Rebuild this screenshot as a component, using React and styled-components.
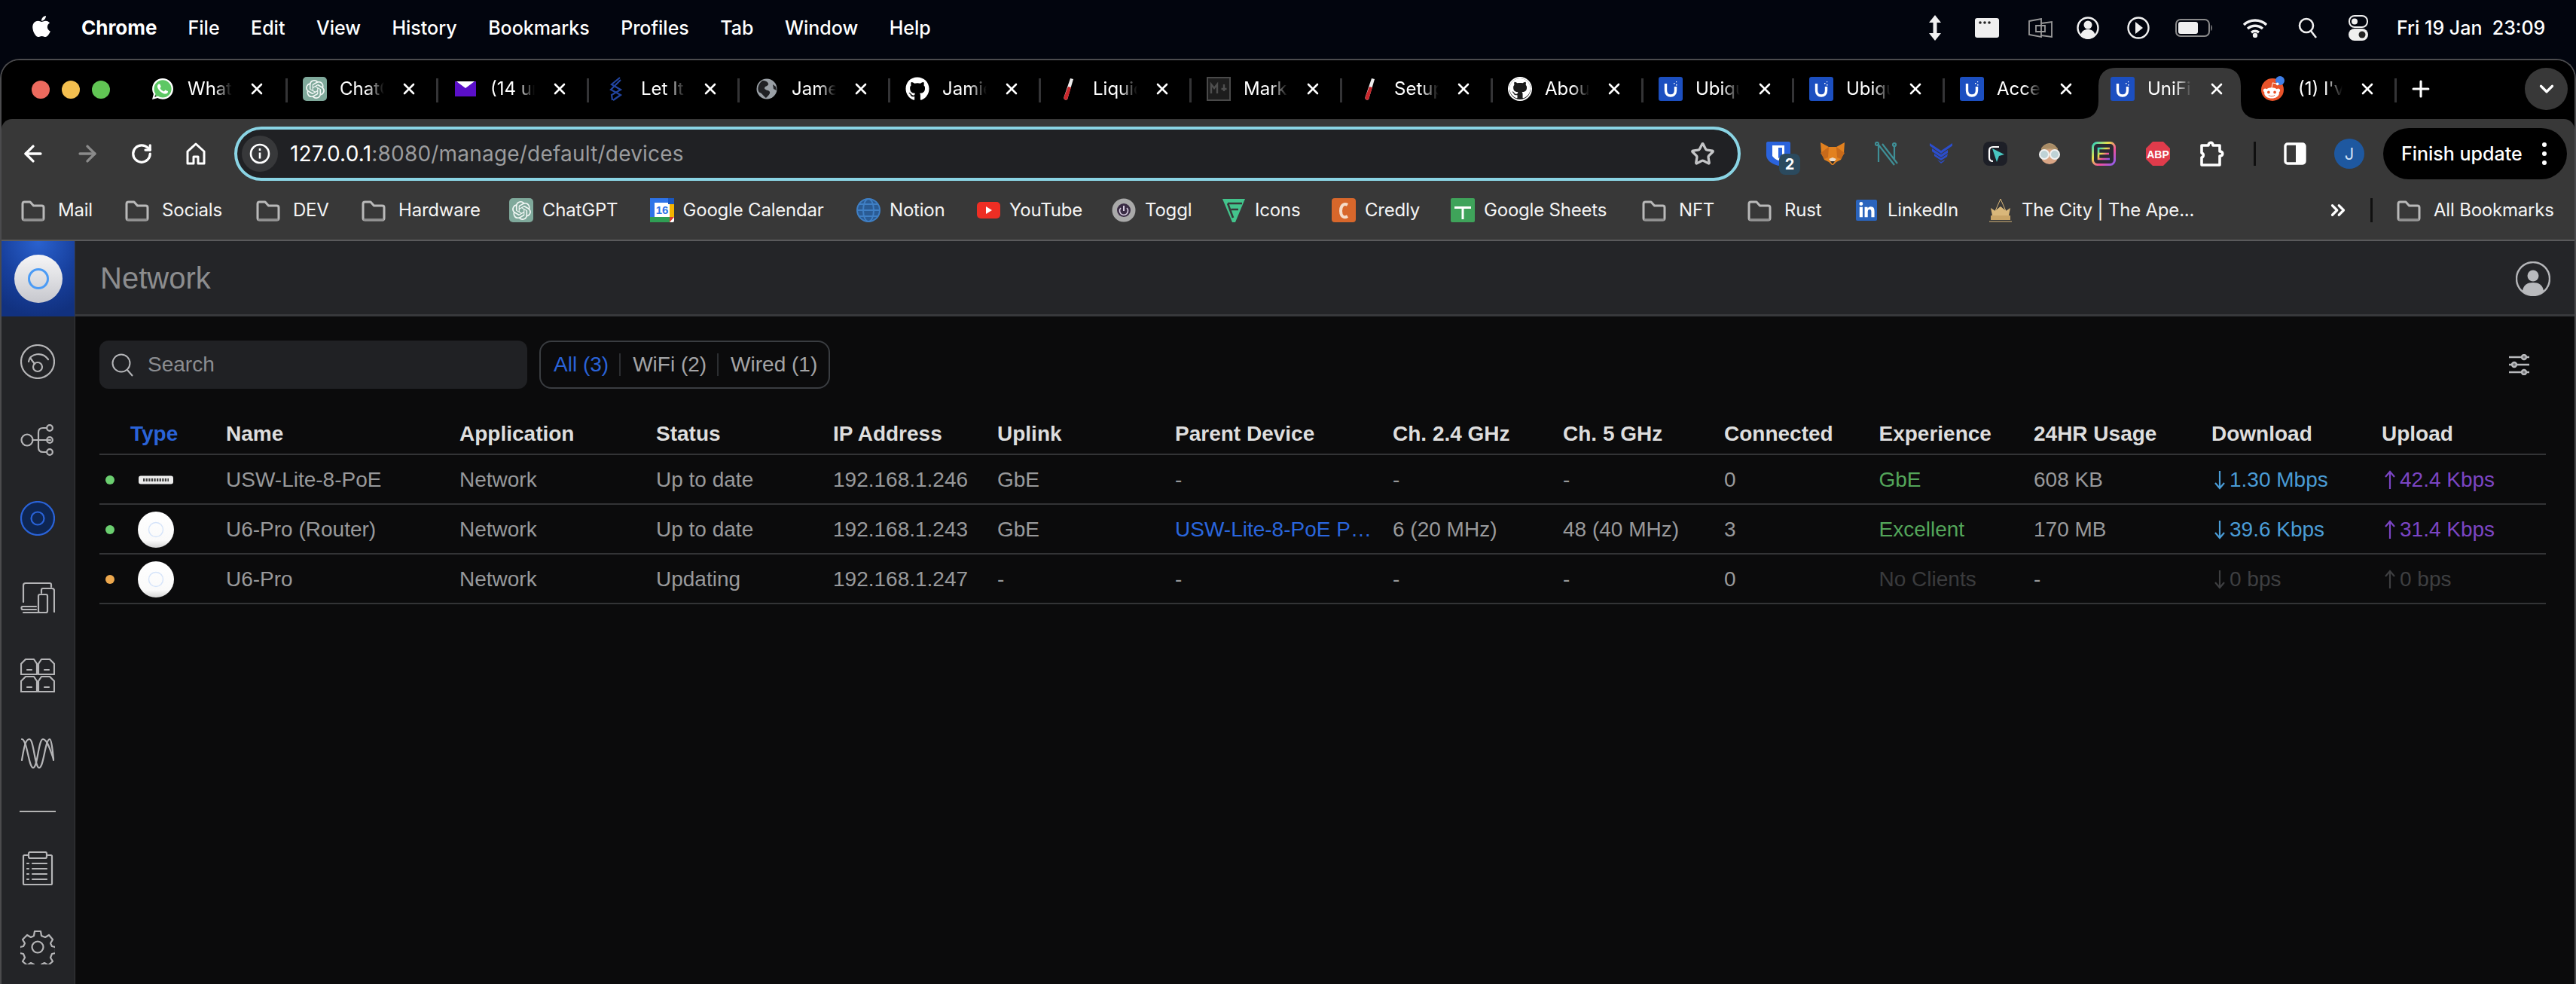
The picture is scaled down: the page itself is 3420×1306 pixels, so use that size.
import React from "react";
import styled, { createGlobalStyle } from "styled-components";
import { FaApple, FaWhatsapp, FaGithub, FaLinkedinIn, FaRedditAlien } from "react-icons/fa";
import { SiOpenai } from "react-icons/si";
import { ArrowLeft, ArrowRight, RotateCw, Star, Plus, ChevronDown, X, ChevronsRight } from "lucide-react";

const Global = createGlobalStyle`
  html, body { margin: 0; padding: 0; background: #02050e; }
  * { box-sizing: border-box; }
`;
const UI = `"Inter", "Liberation Sans", sans-serif`;
const WEB = `"Liberation Sans", Arial, sans-serif`;

const Desktop = styled.div`
  width: 3420px; height: 1306px; overflow: hidden; display: flex; flex-direction: column;
  background: #02050e; font-family: ${UI}; color: #fff;
`;
const MenuBar = styled.div`
  flex: none; height: 78px; display: flex; align-items: center; padding: 0 33px 4px 41px; 
`;
const AppleSlot = styled.span`display: flex; width: 28px; margin-right: 39px; font-size: 32px; position: relative; top: -2px;`;
const MenuItem = styled.span`
  font-size: ${p => (p.$bold ? 26 : 25)}px; font-weight: ${p => (p.$bold ? 700 : 500)}; margin-right: ${p => (p.$bold ? 41 : 41.5)}px; line-height: 1;
`;
const StatusArea = styled.div`margin-left: auto; display: flex; align-items: center;`;
const StatusSlot = styled.span`display: flex; justify-content: center; align-items: center; width: ${p => p.$w}px;`;
const Clock = styled.span`font-size: 25px; font-weight: 500; margin-left: 7px; width: 205px; white-space: pre; line-height: 1;`;

const Window = styled.div`
  flex: 1; min-height: 0; display: flex; flex-direction: column; overflow: hidden;
  border: 2px solid #4b4b4d; border-bottom: 0; border-radius: 26px 26px 0 0; background: #000;
`;
const TabStrip = styled.div`
  flex: none; height: 78px; display: flex; align-items: flex-end; padding-left: 40px; position: relative; background: #000;
`;
const Lights = styled.div`display: flex; gap: 16px; margin-bottom: 27px; margin-right: 34px;`;
const Light = styled.span`width: 24px; height: 24px; border-radius: 50%; background: ${p => p.$c};`;
const Tab = styled.div`
  position: relative; flex: none; width: 200px; height: 68px; padding: 0 0 12px 20px;
  display: flex; align-items: center;
  &:nth-of-type(-n+2) { width: 202px; }
  &::after {
    content: ""; position: absolute; right: 0; top: 14px; width: 3px; height: 32px; background: #343436;
    display: ${p => (p.$noSep ? "none" : "block")};
  }
`;
const TabShape = styled.svg`position: absolute; left: 0; top: 0; overflow: visible;`;
const Fav = styled.span`
  position: relative; flex: none; width: 32px; height: 32px; display: flex; align-items: center; justify-content: center;
`;
const TabTitle = styled.span`
  position: relative; flex: none; width: 62px; margin-left: 17px; font-size: 24px; line-height: 32px; white-space: nowrap; overflow: hidden;
  -webkit-mask-image: linear-gradient(to right, #000 58%, transparent 95%);
  mask-image: linear-gradient(to right, #000 58%, transparent 95%);
`;
const TabClose = styled.span`position: relative; flex: none; display: flex; margin-left: 18px; color: #fff;`;
const NewTab = styled.span`display: flex; margin: 0 0 12px 15px; height: 56px; align-items: center; color: #fff;`;
const TabListBtn = styled.span`
  position: absolute; right: 9px; top: 10px; width: 57px; height: 56px; border-radius: 28px; background: #383838;
  display: flex; align-items: center; justify-content: center; color: #fff;
`;
const WaBubble = styled.span`
  position: relative; width: 32px; height: 32px; display: flex; align-items: center; justify-content: center;
  &::before { content: ""; position: absolute; left: 3px; top: 3px; width: 26px; height: 26px; border-radius: 50%; background: #5dc864; }
  svg { position: relative; }
`;

const Toolbar = styled.div`
  flex: none; height: 92px; background: #383838; border-radius: 14px 14px 0 0; display: flex; align-items: center; padding-left: 6px; padding-top: 0;
`;
const NavBtn = styled.span`
  flex: none; width: 72px; display: flex; align-items: center; justify-content: center; color: ${p => (p.$dim ? "#8b8b8b" : "#fff")};
`;
const Omnibox = styled.div`
  flex: none; width: 2000px; height: 72px; margin-left: 15px; border: 4px solid #8ad4e4; border-radius: 36px; background: #202124;
  display: flex; align-items: center; padding: 0 20px 0 6px;
`;
const InfoChip = styled.span`
  flex: none; width: 48px; height: 48px; border-radius: 50%; background: #37383a; display: flex; align-items: center; justify-content: center;
`;
const Url = styled.span`margin-left: 16px; font-size: 28px; line-height: 1; color: #9b9c9e; letter-spacing: 0.2px; white-space: nowrap;`;
const UrlHost = styled.span`color: #fff;`;
const StarSlot = styled.span`margin-left: auto; display: flex; color: #c4c5c7; margin-right: 10px;`;
const ExtGroup = styled.div`display: flex; align-items: center; margin-left: 14px;`;
const ExtSlot = styled.span`
  flex: none; width: 72px; height: 60px; position: relative; display: flex; align-items: center; justify-content: center;
`;
const Badge = styled.span`
  position: absolute; left: 37px; top: 30px; width: 28px; height: 28px; border-radius: 8px; background: #2b4a5e; color: #fff;
  font-size: 20px; font-weight: 700; display: flex; align-items: center; justify-content: center;
`;
const ToolSep = styled.span`flex: none; width: 3px; height: 32px; background: #0f0f0f; margin: 0 16px 0 19px;`;
const Avatar = styled.span`
  width: 40px; height: 40px; border-radius: 50%; background: #1e58a0; color: #cfe0f5; font-size: 22px; display: flex; align-items: center; justify-content: center;
`;
const FinishPill = styled.span`
  flex: none; margin-left: 9px; width: 244px; height: 68px; border-radius: 34px; background: #000; display: flex; align-items: center;
  padding-left: 24px; font-size: 25px; font-weight: 500;
`;
const KebabSlot = styled.span`margin-left: auto; margin-right: 26px; display: flex;`;

const BookmarksBar = styled.div`
  flex: none; height: 70px; background: #383838; border-bottom: 2px solid #5a5a5c; display: flex; align-items: center; padding: 0 0 10px 26px;
`;
const Bookmark = styled.span`
  flex: none; width: ${p => p.$w}px; display: flex; align-items: center; gap: 12px; font-size: 24px; letter-spacing: -0.2px; line-height: 32px; white-space: nowrap; color: #f4f4f4;
`;
const BookmarkFav = styled.span`flex: none; width: 32px; height: 32px; display: flex; align-items: center; justify-content: center;`;
const FolderBox = styled(BookmarkFav)`margin-right: 5px;`;
const OverflowBtn = styled.span`margin-left: auto; display: flex; color: #fff; margin-right: 28px;`;
const BarSep = styled.span`width: 3px; height: 32px; background: #101010; margin-right: 32px;`;
const LastBookmark = styled(Bookmark)`width: 236px;`;

const Page = styled.div`flex: 1; min-height: 0; display: flex; background: #0b0b0c;`;
const Sidebar = styled.nav`
  flex: none; width: 98px; display: flex; flex-direction: column; align-items: stretch; background: #232427; border-right: 1px solid #37383b; overflow: hidden;
`;
const LogoTile = styled.div`
  flex: none; height: 100px; display: flex; align-items: center; justify-content: center;
  background: radial-gradient(ellipse 90% 100% at 50% 0%, #2a62cf 0%, #173f9c 60%, #11317f 100%);
  margin-bottom: 8px; margin-right: -1px;
`;
const SideItem = styled.div`flex: none; height: 104px; display: flex; align-items: center; justify-content: center; padding-right: 1px;`;
const SideDivider = styled.div`flex: none; height: 2px; width: 48px; margin: 24px 0 23px 24px; background: #b3b3b3;`;

const Main = styled.main`flex: 1; min-width: 0; display: flex; flex-direction: column;`;
const TopBar = styled.header`
  flex: none; height: 100px; background: #242528; border-bottom: 3px solid #38393c; display: flex; align-items: center; padding: 2px 32px 0 33px;
`;
const PageTitle = styled.h1`margin: 0; font: 400 40px ${WEB}; color: #8c8d8f;`;
const UserSlot = styled.span`margin-left: auto; display: flex; margin-right: 0;`;
const Content = styled.section`flex: 1; padding: 32px 38px 0 32px; font-family: ${WEB};`;
const FilterRow = styled.div`display: flex; align-items: center; height: 64px;`;
const SearchBox = styled.div`
  width: 568px; height: 64px; border-radius: 12px; background: #202124; display: flex; align-items: center; gap: 18px; padding-left: 16px;
  font-size: 28px; color: #8b8d91;
`;
const Segments = styled.div`
  margin-left: 16px; width: 386px; height: 64px; border: 2px solid #3a3d41; border-radius: 16px; display: flex; align-items: center; padding-left: 17px;
  font-size: 28px; color: #a3a4a6;
`;
const Segment = styled.span`color: ${p => (p.$on ? "#2a63d8" : "#a3a4a6")}; white-space: nowrap;`;
const SegSep = styled.span`width: 2px; height: 30px; background: #2c2e31; margin: 0 16px 0 14px;`;
const SlidersSlot = styled.span`margin-left: auto; margin-right: 21px; display: flex;`;

const COLS = "168px 310px 261px 235px 218px 236px 289px 226px 214px 205.5px 205.5px 236px 226px 218px";
const HeadRow = styled.div`
  display: grid; grid-template-columns: ${COLS}; height: 56px; margin-top: 32px; padding-top: 2px; align-items: center;
  border-bottom: 2px solid #333436; font-size: 28px; font-weight: 700; color: #dedede;
`;
const HeadCell = styled.span`
  white-space: nowrap; padding-left: ${p => p.$pad || 0}px; color: ${p => (p.$on ? "#2a63d8" : "#dedede")};
`;
const Row = styled.div`
  display: grid; grid-template-columns: ${COLS}; height: 66px; padding-top: 1px; align-items: center; border-bottom: 2px solid #333436; font-size: 28px; color: #98999b;
`;
const Cell = styled.span`white-space: nowrap; color: ${p => p.$c || "#98999b"};`;
const LinkCell = styled.span`display: block; width: 262px; white-space: nowrap; overflow: hidden; text-overflow: ellipsis; color: #2a66de;`;
const TypeCell = styled.span`display: flex; align-items: center; padding-left: 8px;`;
const Dot = styled.span`width: 12px; height: 12px; border-radius: 50%; background: ${p => p.$c}; flex: none; `;
const DeviceSlot = styled.span`margin-left: 31px; width: 48px; display: flex; justify-content: center;`;
const Speed = styled.span`display: flex; align-items: center; gap: 4px; padding-left: 2px; white-space: nowrap; color: ${p => p.$c};`;
const Tile = styled.span`
  width: ${p => p.$w || 32}px; height: ${p => p.$h || 32}px; border-radius: ${p => p.$r || 5}px; background: ${p => p.$bg};
  display: flex; align-items: center; justify-content: center;
`;
const Round = styled.span`
  width: ${p => p.$s}px; height: ${p => p.$s}px; border-radius: 50%; background: ${p => p.$bg};
  display: flex; align-items: ${p => p.$end ? "flex-end" : "center"}; justify-content: center; overflow: hidden;
`;
const RedditWrap = styled.span`
  width: 32px; height: 34px; position: relative; display: flex; align-items: center; justify-content: center;
`;
const RedditFace = styled.span`position: absolute; left: 2px; top: 7px; display: flex;`;

/* ---------- icons ---------- */
const Folder = () => (
  <svg width="32" height="32" viewBox="0 0 32 32" fill="none">
    <path d="M2 7.500C2 6 3 5 4.500 5h7.500l4.500 5h11c1.500 0 2.500 1 2.500 2.500v14c0 1.500-1 2.500-2.500 2.500h-23C3 29 2 28 2 26.500z" stroke="#b9b9b9" strokeWidth="3" strokeLinejoin="round" />
    <path d="M2.500 28.500h27" stroke="#8d8d8d" strokeWidth="2.500" />
  </svg>
);
const UbiTile = () => (
  <svg width="32" height="32" viewBox="0 0 32 32">
    <rect width="32" height="32" rx="3" fill="#1c4fc0" />
    <path d="M9.500 9v9c0 4.500 2.800 7 6.500 7s6.500-2.500 6.500-7V13" fill="none" stroke="#fff" strokeWidth="3.400" />
    <path d="M20 8h1.500v1.500H20zM23 6h1.200v1.200H23zM23 10h1.500v1.500H23z" fill="#fff" />
  </svg>
);
const GptTile = () => (
  <Tile $bg="#7fa99b"><SiOpenai size={25} color="#f2f7f5" /></Tile>
);
const Mail = () => (
  <svg width="28" height="22" viewBox="0 0 28 22"><rect width="28" height="20" y="1" fill="#5a0fc8" /><path d="M2 1h24l-12 9z" fill="#fff" /></svg>
);
const LetIt = () => (
  <svg width="20" height="32" viewBox="0 0 20 32" fill="none" stroke="#22449f" strokeWidth="2.200"><path d="M15 1 4 10l12 7-12 7 1 7" /><path d="M16 4 3 17l13 7L6 31" /></svg>
);
const Globe = () => (
  <svg width="28" height="30" viewBox="0 0 28 28"><circle cx="14" cy="14" r="13.500" fill="#9aa0a6" /><path d="M8 3c4 0 7 1 8 4s-5 3-5 6 6 2 7 5-4 7-5 8c-3-2-5-6-8-7S0 10 8 3zM22 8l4 3 1 5-4-2z" fill="#202124" /></svg>
);
const Tube = () => (
  <svg width="20" height="32" viewBox="0 0 20 32"><path d="M13 2 17 3 9 30c-3 1.500-5 0-4.500-3z" fill="#ededed" /><path d="M10 13l4 1-5 16c-3 1.500-5 0-4.500-3z" fill="#c9272c" /></svg>
);
const Md = () => (
  <svg width="32" height="32" viewBox="0 0 32 32"><rect x="1" y="1" width="30" height="30" fill="#1d1d1d" stroke="#4a4a4a" strokeWidth="2" /><path d="M6 22V10l4 5 4-5v12M23 10v9M19.500 16h7" fill="none" stroke="#4e4e4e" strokeWidth="2.400" /></svg>
);
const GhCircle = () => (
  <Round $s={32} $bg="#fff">
    <Round $s={28} $bg="#1a1a1a" $end><FaGithub size={30} color="#fff" /></Round>
  </Round>
);
const Reddit = () => (
  <RedditWrap>
    <svg width="32" height="34" viewBox="0 0 32 34"><circle cx="15" cy="18" r="15" fill="#e9532a" /><circle cx="25" cy="6" r="6" fill="#3f7fe8" /></svg>
    <RedditFace><FaRedditAlien size={24} color="#fff" /></RedditFace>
  </RedditWrap>
);
const Whats = () => (
  <WaBubble><FaWhatsapp size={32} color="#fff" /></WaBubble>
);
const tabs = [
  ["Whatsa", <Whats />],
  ["ChatGPT", <GptTile />],
  ["(14 unread", <Mail />],
  ["Let It", <LetIt />],
  ["James", <Globe />],
  ["Jamie", <FaGithub size={32} color="#fff" />],
  ["Liquid", <Tube />],
  ["Markdown", <Md />],
  ["Setup", <Tube />],
  ["About", <GhCircle />],
  ["Ubiquiti", <UbiTile />],
  ["Ubiquiti", <UbiTile />],
  ["Access", <UbiTile />],
  ["UniFi", <UbiTile />],
  ["(1) I've", <Reddit />],
];

const FavCal = () => (
  <svg width="32" height="32" viewBox="0 0 32 32"><rect width="32" height="32" rx="2" fill="#fff" /><path d="M0 0h24v6H6v19H0z" fill="#2e73e8" /><path d="M24 0h8v8h-8z" fill="#1a57c0" /><path d="M26 8h6v17h-6z" fill="#f4b400" /><path d="M0 25h26v7H0z" fill="#2f9e54" /><path d="M26 25h6l-6 7z" fill="#d93c2e" /><text x="16" y="21" fontSize="15" fontWeight="700" textAnchor="middle" fill="#2e73e8" fontFamily="Liberation Sans">16</text></svg>
);
const FavGlobe = () => (
  <svg width="32" height="32" viewBox="0 0 32 32" fill="none" stroke="#3f7fc4" strokeWidth="2"><circle cx="16" cy="16" r="15" fill="#2a5b94" /><ellipse cx="16" cy="16" rx="7" ry="15" /><path d="M1 16h30M3 8h26M3 24h26" /></svg>
);
const FavYt = () => (
  <svg width="31" height="22" viewBox="0 0 31 22"><rect width="31" height="22" rx="5" fill="#ee2e24" /><path d="M12 6l8 5-8 5z" fill="#fff" /></svg>
);
const FavToggl = () => (
  <svg width="32" height="32" viewBox="0 0 32 32" fill="none"><circle cx="16" cy="16" r="15.500" fill="#a9a9a9" /><circle cx="16" cy="16" r="9" fill="#3a2b44" /><path d="M16 10v7" stroke="#d9cfe2" strokeWidth="2" /><path d="M12 13a5.500 5.500 0 1 0 8 0" stroke="#d9cfe2" strokeWidth="1.600" /></svg>
);
const FavIcons = () => (
  <svg width="32" height="32" viewBox="0 0 32 32"><path d="M1 1H31L18 32H14Z" fill="#43c48c" /><path d="M8 7L15 26M8 7H27M12.500 15H22" fill="none" stroke="#383838" strokeWidth="2.600" /></svg>
);
const FavCredly = () => (
  <svg width="32" height="32" viewBox="0 0 32 32"><rect width="32" height="32" rx="4" fill="#d8672b" /><path d="M21 9c-5-3-9 1-9 8s4 10 9 7" fill="none" stroke="#f5dcc9" strokeWidth="4" /></svg>
);
const FavSheets = () => (
  <svg width="32" height="32" viewBox="0 0 32 32"><rect width="32" height="32" rx="2" fill="#3fa35a" /><path d="M5 11h22v3H17.500v14h-3V14H5z" fill="#fff" /></svg>
);
const FavIn = () => (
  <Tile $w={28} $h={28} $r={2} $bg="#2a64bd"><FaLinkedinIn size={23} color="#fff" /></Tile>
);
const FavCrown = () => (
  <svg width="32" height="32" viewBox="0 0 32 32"><path d="M16 1 9 17l7-5 7 5z" fill="none" stroke="#d9b77a" strokeWidth="1" /><path d="M3 13l6 4 7-6 7 6 6-4-2 10H5z" fill="#d9b77a" /><rect x="3" y="23" width="26" height="6" fill="#c9a466" /><path d="M1 31h30" stroke="#d9b77a" /></svg>
);
const bookmarks = [
  ["Mail", 138, null], ["Socials", 174, null], ["DEV", 140, null], ["Hardware", 196, null],
  ["ChatGPT", 186.5, <GptTile />], ["Google Calendar", 274.5, <FavCal />], ["Notion", 159, <FavGlobe />],
  ["YouTube", 180, <FavYt />], ["Toggl", 146, <FavToggl />], ["Icons", 146, <FavIcons />],
  ["Credly", 158, <FavCredly />], ["Google Sheets", 254, <FavSheets />], ["NFT", 140, null],
  ["Rust", 142, null], ["LinkedIn", 178, <FavIn />], ["The City | The Ape...", 300, <FavCrown />],
];

const exts = [
  <svg width="32" height="32" viewBox="0 0 32 32"><path d="M2 0h28c1 0 2 1 2 2v16c0 7-8 12-16 14C8 30 0 25 0 18V2C0 1 1 0 2 0z" fill="#2a63dc" /><path d="M8 5h16v14c-2 3-5 5-8 6-3-1-6-3-8-6z" fill="#fff" /><path d="M16 8h5v10c-1 2-3 3-5 4z" fill="#2a63dc" /></svg>,
  <svg width="32" height="30" viewBox="0 0 32 30"><path d="M0 0l11 6h10L32 0l-1 14-4 9-6 3-4 4h-2l-4-4-6-3-4-9z" fill="#e2811f" /><path d="M0 14l11-8-1 14-5 2zM32 14L21 6l1 14 5 2z" fill="#c86a1a" /><path d="M11 22l5 6 5-6-5-2z" fill="#ecdcc8" /><path d="M13 25l3 4 3-4z" fill="#2b2b2b" /></svg>,
  <svg width="32" height="32" viewBox="0 0 32 32" fill="none" stroke="#3f8f96" strokeWidth="2.200"><path d="M4 3l22 28M10 3l20 26M5 6v21M26 5v18" /><circle cx="3" cy="3" r="2" /><circle cx="26" cy="4" r="2" /></svg>,
  <svg width="30" height="28" viewBox="0 0 30 28" fill="#2b4dcc"><path d="M0 0l15 10L30 0v3.500L15 14 0 3.500z" /><path d="M3 7l12 8 9-6v4l-9 6L3 11zM6 14l9 6 9-6-1 4-8 5-9-6zM10 22l5 3 5-3-1 2-4 3z" /></svg>,
  <svg width="32" height="32" viewBox="0 0 32 32"><rect width="32" height="32" rx="8" fill="#1d1f27" /><path d="M21 7h-8c-3 0-5 2-5 5v9c0 3 2 5 5 5" fill="none" stroke="#fff" strokeWidth="2.200" /><path d="M12 9l16 8-7 2-3 8z" fill="#48c6c0" /></svg>,
  <svg width="30" height="28" viewBox="0 0 30 28"><ellipse cx="15" cy="9" rx="10" ry="9" fill="#b79a72" /><ellipse cx="15" cy="18" rx="11" ry="10" fill="#d9a585" /><path d="M4 11c4-6 18-6 22 0l0-4c-6-8-18-8-22 0z" fill="#a98c66" /><circle cx="8" cy="15" r="6" fill="#bfd2d6" stroke="#f2f2f2" strokeWidth="2" /><circle cx="22" cy="15" r="6" fill="#bfd2d6" stroke="#f2f2f2" strokeWidth="2" /></svg>,
  <svg width="32" height="32" viewBox="0 0 32 32"><defs><linearGradient id="eg" x1="0" y1="0" x2="1" y2="1"><stop offset="0" stopColor="#29d3c0" /><stop offset=".35" stopColor="#e8e04a" /><stop offset=".65" stopColor="#f0509a" /><stop offset="1" stopColor="#8a5cf0" /></linearGradient></defs><rect x="1.500" y="1.500" width="29" height="29" rx="6" fill="#2a2a33" stroke="url(#eg)" strokeWidth="3" /><path d="M24 9H9v14h15M9 16h14" fill="none" stroke="url(#eg)" strokeWidth="2.600" /></svg>,
  <svg width="32" height="32" viewBox="0 0 32 32"><path d="M9 0h14l9 9v14l-9 9H9l-9-9V9z" fill="#e03b4b" /><text x="16" y="21.500" fontSize="14" fontWeight="700" textAnchor="middle" fill="#fff" fontFamily="Liberation Sans">ABP</text></svg>,
  <svg width="34" height="34" viewBox="0 0 34 34" fill="none" stroke="#fff" strokeWidth="3.600" strokeLinejoin="round"><path d="M3 6h9c0-5 6-5 6 0h9v8c5 0 5 6 0 6v12H3V22c3-1 3-5 0-6z" /></svg>,
];

const Chk = ({ children }) => <svg width="46" height="46" viewBox="0 0 46 46" fill="none" stroke="#b5b5b7" strokeWidth="2.200" strokeLinecap="round" strokeLinejoin="round">{children}</svg>;
const sideIcons = [
  <Chk><circle cx="23" cy="23" r="22" /><path d="M11 23c2-11 18-14 26-3" /><circle cx="23" cy="30" r="6" /><path d="M19 26l-6-8" /></Chk>,
  <Chk><circle cx="9" cy="23" r="7.500" /><path d="M16 23h24M24 23V13c0-4 2-6 6-6h5M24 23v10c0 4 2 6 6 6h5" /><circle cx="39" cy="7" r="3.800" /><circle cx="39" cy="23" r="3.800" /><circle cx="39" cy="39" r="3.800" /></Chk>,
  <svg width="46" height="46" viewBox="0 0 46 46" fill="#0e2652" stroke="#2a63d8" strokeWidth="2.200"><circle cx="23" cy="23" r="22" /><circle cx="23" cy="23" r="8.500" /></svg>,
  <Chk><path d="M4 30V8c0-2 1-3 3-3h32c1 0 2 1 2 2v3" /><path d="M28 18v-4c0-1 1-2 2-2h12c2 0 3 1 3 3v28" /><rect x="24" y="20" width="12" height="24" rx="2" /><path d="M21 36H3c-2 0-2 4 0 4h18M28 44H4" /></Chk>,
  <Chk><path d="M1 22V8l6-6h11l4 6v14z" /><path d="M24 22V8l4-6h11l6 6v14z" /><path d="M1 45V31l6-6h11l4 6v14z" /><path d="M24 45V31l4-6h11l6 6v14z" /><path d="M9 16h6M32 16h6M9 39h6M32 39h6" /></Chk>,
  <Chk><path d="M2 32C5 14 7 4 12 4C18 4 19 42 25 42C31 42 33 4 39 4C41 4 43 18 44 32" /><path d="M2 4C9 4 11 42 17 42C23 42 24 4 30 4C36 4 40 20 44 30" /></Chk>,
];
const extraIcons = [
  <Chk><rect x="4" y="5" width="38" height="39" rx="1.500" /><rect x="11" y="1" width="24" height="8" rx="2" fill="#232427" /><path d="M16 16h19M16 23h19M16 30h19M16 37h19M9 16h2M9 23h2M9 30h2M9 37h2" /></Chk>,
  <Chk><circle cx="23" cy="23" r="7.500" /><path d="M19 2h8l1 6 5 2 5-3 5 6-3 5 2 4 5 1v8l-5 1-2 5 3 5-6 5-5-3-4 2-1 5h-8l-1-5-4-2-5 3-6-5 3-5-2-5-5-1v-8l5-1 2-4-3-5 6-6 5 3 4-2z" /></Chk>,
];

const Switch = () => (
  <svg width="46" height="12" viewBox="0 0 46 12"><rect width="46" height="11" y=".5" rx="3" fill="#ececec" /><path d="M6 6h34" stroke="#3d3d3d" strokeWidth="4" strokeDasharray="2.300 1.300" /></svg>
);
const Disc = () => (
  <svg width="48" height="50" viewBox="0 0 48 50"><defs><linearGradient id="dg" x1="0" y1="0" x2="0" y2="1"><stop offset="0" stopColor="#fff" /><stop offset=".8" stopColor="#fafafa" /><stop offset="1" stopColor="#d5d5d5" /></linearGradient></defs><circle cx="24" cy="25" r="24" fill="url(#dg)" /><circle cx="24" cy="25" r="9.500" fill="none" stroke="#d5e4fa" strokeWidth="1.400" /></svg>
);
const Down = ({ c }) => (
  <svg width="18" height="26" viewBox="0 0 18 26" fill="none" stroke={c} strokeWidth="2.200"><path d="M9 1v23M3 17l6 7 6-7" /></svg>
);
const Up = ({ c }) => (
  <svg width="18" height="26" viewBox="0 0 18 26" fill="none" stroke={c} strokeWidth="2.200"><path d="M9 25V2M3 9l6-7 6 7" /></svg>
);
const BLUE = "#4a9cd6", PURPLE = "#7b45c4", DIM = "#3e3f41", GREEN = "#53a65a";

const heads = ["Type", "Name", "Application", "Status", "IP Address", "Uplink", "Parent Device", "Ch. 2.4 GHz", "Ch. 5 GHz", "Connected", "Experience", "24HR Usage", "Download", "Upload"];
const rows = [
  { dot: "#6bcf70", dev: <Switch />, name: "USW-Lite-8-PoE", status: "Up to date", ip: "192.168.1.246", up: "GbE", parent: "-", c24: "-", c5: "-", conn: "0", exp: "GbE", expC: GREEN, use: "608 KB", dl: "1.30 Mbps", ul: "42.4 Kbps", dlC: BLUE, ulC: PURPLE },
  { dot: "#6bcf70", dev: <Disc />, name: "U6-Pro (Router)", status: "Up to date", ip: "192.168.1.243", up: "GbE", parent: "USW-Lite-8-PoE Port 1", link: true, c24: "6 (20 MHz)", c5: "48 (40 MHz)", conn: "3", exp: "Excellent", expC: GREEN, use: "170 MB", dl: "39.6 Kbps", ul: "31.4 Kbps", dlC: BLUE, ulC: PURPLE },
  { dot: "#eda84e", dev: <Disc />, name: "U6-Pro", status: "Updating", ip: "192.168.1.247", up: "-", parent: "-", c24: "-", c5: "-", conn: "0", exp: "No Clients", expC: "#3a3b3d", use: "-", dl: "0 bps", ul: "0 bps", dlC: DIM, ulC: DIM },
];

export default function App() {
  return (
    <Desktop>
      <Global />
      <MenuBar>
        <AppleSlot><FaApple /></AppleSlot>
        <MenuItem $bold>Chrome</MenuItem>
        {["File", "Edit", "View", "History", "Bookmarks", "Profiles", "Tab", "Window", "Help"].map(m => <MenuItem key={m}>{m}</MenuItem>)}
        <StatusArea>
          <StatusSlot $w={70}><svg width="18" height="34" viewBox="0 0 18 34" fill="#f0f0f0"><path d="M9 0l8 10h-5.500v14H17l-8 10-8-10h5.500V10H1z" /></svg></StatusSlot>
          <StatusSlot $w={68}><svg width="32" height="26" viewBox="0 0 32 26"><rect width="32" height="26" rx="3" fill="#efefef" /><circle cx="7" cy="6" r="1.800" fill="#222" /><circle cx="13" cy="6" r="1.800" fill="#222" /><circle cx="19" cy="6" r="1.800" fill="#222" /></svg></StatusSlot>
          <StatusSlot $w={74}><svg width="32" height="26" viewBox="0 0 32 26" fill="none" stroke="#9a9a9a" strokeWidth="1.800"><path d="M1 4l16-3v24L1 22zM17 7l14-2v20l-14-2M10 10h12v8H10z" /></svg></StatusSlot>
          <StatusSlot $w={52}><svg width="30" height="32" viewBox="0 0 30 32"><circle cx="15" cy="16" r="13.500" fill="none" stroke="#f0f0f0" strokeWidth="2.400" /><circle cx="15" cy="12" r="5.500" fill="#f0f0f0" /><path d="M5 26c2-6 5-8 10-8s8 2 10 8c-3 3-7 5-10 5s-7-2-10-5z" fill="#f0f0f0" /></svg></StatusSlot>
          <StatusSlot $w={81}><svg width="30" height="32" viewBox="0 0 30 32"><circle cx="15" cy="16" r="13.500" fill="none" stroke="#f0f0f0" strokeWidth="2.400" /><path d="M11 8l10 8-10 8z" fill="#f0f0f0" /></svg></StatusSlot>
          <StatusSlot $w={68}><svg width="50" height="24" viewBox="0 0 50 24"><rect x="1" y="1" width="44" height="22" rx="6" fill="none" stroke="#8a8a8a" strokeWidth="2" /><rect x="4" y="4" width="26" height="16" rx="3" fill="#efefef" /><path d="M47.500 8c2 1 2 7 0 8z" fill="#8a8a8a" /></svg></StatusSlot>
          <StatusSlot $w={94}><svg width="34" height="26" viewBox="0 0 34 26" fill="none" stroke="#f2f2f2" strokeWidth="3.400"><path d="M2 9c8-8 22-8 30 0M7 14c6-5 14-5 20 0M12 19c3-2 7-2 10 0" /><circle cx="17" cy="23" r="1.500" fill="#f2f2f2" /></svg></StatusSlot>
          <StatusSlot $w={46}><svg width="26" height="28" viewBox="0 0 26 28" fill="none" stroke="#f0f0f0" strokeWidth="2.600"><circle cx="11" cy="11" r="9" /><path d="M17 18l7 9" /></svg></StatusSlot>
          <StatusSlot $w={88}><svg width="26" height="34" viewBox="0 0 26 34"><rect x="1" y="1" width="24" height="15" rx="7" fill="none" stroke="#efefef" strokeWidth="2" /><circle cx="8" cy="8.500" r="4" fill="#efefef" /><rect y="18" width="26" height="16" rx="8" fill="#efefef" /><circle cx="18" cy="26" r="4.500" fill="#222" /></svg></StatusSlot>
          <Clock>Fri 19 Jan  23:09</Clock>
        </StatusArea>
      </MenuBar>

      <Window>
        <TabStrip>
          <Lights>
            <Light $c="#ec6a5e" /><Light $c="#f4bf4f" /><Light $c="#61c554" />
          </Lights>
          {tabs.map(([title, icon], i) => (
            <Tab key={i} $noSep={i === 12 || i === 13}>
              {i === 13 && (
                <TabShape width="200" height="68" viewBox="0 0 200 68"><path d="M-22 68Q4 68 4 44V24Q4 0 28 0H169Q193 0 193 24V44Q193 68 219 68Z" fill="#383838" /></TabShape>
              )}
              <Fav>{icon}</Fav>
              <TabTitle>{title}</TabTitle>
              <TabClose><X size={24} strokeWidth={2.600} /></TabClose>
            </Tab>
          ))}
          <NewTab><Plus size={34} strokeWidth={2.200} /></NewTab>
          <TabListBtn><ChevronDown size={30} strokeWidth={2.600} /></TabListBtn>
        </TabStrip>

        <Toolbar>
          <NavBtn><ArrowLeft size={34} strokeWidth={2.400} /></NavBtn>
          <NavBtn $dim><ArrowRight size={34} strokeWidth={2.400} /></NavBtn>
          <NavBtn><RotateCw size={30} strokeWidth={2.600} /></NavBtn>
          <NavBtn>
            <svg width="30" height="30" viewBox="0 0 30 30" fill="none" stroke="#fff" strokeWidth="3" strokeLinejoin="round"><path d="M4 28V12L15 2l11 10v16h-8v-9h-6v9z" /></svg>
          </NavBtn>
          <Omnibox>
            <InfoChip>
              <svg width="28" height="28" viewBox="0 0 28 28" fill="none" stroke="#fff" strokeWidth="2.600"><circle cx="14" cy="14" r="12" /><path d="M14 12.500v8M14 7v3" /></svg>
            </InfoChip>
            <Url><UrlHost>127.0.0.1</UrlHost>:8080/manage/default/devices</Url>
            <StarSlot><Star size={33} strokeWidth={2.400} /></StarSlot>
          </Omnibox>
          <ExtGroup>
            {exts.map((e, i) => (
              <ExtSlot key={i}>{e}{i === 0 && <Badge>2</Badge>}</ExtSlot>
            ))}
          </ExtGroup>
          <ToolSep />
          <ExtSlot>
            <svg width="30" height="30" viewBox="0 0 30 30" fill="none"><rect x="2" y="2" width="26" height="26" rx="3" stroke="#fff" strokeWidth="3.400" /><rect x="16" y="2" width="12" height="26" fill="#fff" /></svg>
          </ExtSlot>
          <ExtSlot><Avatar>J</Avatar></ExtSlot>
          <FinishPill>
            Finish update
            <KebabSlot><svg width="8" height="32" viewBox="0 0 8 32" fill="#fff"><circle cx="4" cy="4" r="3" /><circle cx="4" cy="16" r="3" /><circle cx="4" cy="28" r="3" /></svg></KebabSlot>
          </FinishPill>
        </Toolbar>

        <BookmarksBar>
          {bookmarks.map(([label, w, icon]) => (
            <Bookmark key={label} $w={w}>
              {icon ? <BookmarkFav>{icon}</BookmarkFav> : <FolderBox><Folder /></FolderBox>}
              {label}
            </Bookmark>
          ))}
          <OverflowBtn><ChevronsRight size={30} strokeWidth={2.600} /></OverflowBtn>
          <BarSep />
          <LastBookmark $w={236}><FolderBox><Folder /></FolderBox>All Bookmarks</LastBookmark>
        </BookmarksBar>

        <Page>
          <Sidebar>
            <LogoTile>
              <svg width="64" height="64" viewBox="0 0 64 64"><defs><linearGradient id="lg" x1="0" y1="0" x2="0" y2="1"><stop offset="0" stopColor="#f6f6f7" /><stop offset="1" stopColor="#c6c7cd" /></linearGradient></defs><circle cx="32" cy="32" r="32" fill="url(#lg)" /><circle cx="32" cy="32" r="12.500" fill="none" stroke="#4b9bf5" strokeWidth="3" /></svg>
            </LogoTile>
            {sideIcons.map((ic, i) => <SideItem key={i}>{ic}</SideItem>)}
            <SideDivider />
            {extraIcons.map((ic, i) => <SideItem key={i}>{ic}</SideItem>)}
          </Sidebar>
          <Main>
            <TopBar>
              <PageTitle>Network</PageTitle>
              <UserSlot>
                <svg width="46" height="46" viewBox="0 0 46 46"><circle cx="23" cy="23" r="22" fill="none" stroke="#b5b6b9" strokeWidth="2.400" /><circle cx="23" cy="19" r="7.500" fill="#b9babd" /><path d="M9 39c1-8 7-11 14-11s13 3 14 11c-4 4-9 6-14 6s-10-2-14-6z" fill="#b9babd" /></svg>
              </UserSlot>
            </TopBar>
            <Content>
              <FilterRow>
                <SearchBox>
                  <svg width="30" height="34" viewBox="0 0 30 34" fill="none" stroke="#b5b6b9" strokeWidth="2"><circle cx="13" cy="15" r="11.500" /><path d="M21 24l7 8" /></svg>
                  Search
                </SearchBox>
                <Segments>
                  <Segment $on>All (3)</Segment><SegSep />
                  <Segment>WiFi (2)</Segment><SegSep />
                  <Segment>Wired (1)</Segment>
                </Segments>
                <SlidersSlot>
                  <svg width="29" height="28" viewBox="0 0 29 28" fill="none" stroke="#b9babd" strokeWidth="2.400"><path d="M1 4h27M1 14h27M1 24h27" /><circle cx="21" cy="4" r="3" fill="#6c6d70" /><circle cx="8" cy="14" r="3" fill="#6c6d70" /><circle cx="21" cy="24" r="3" fill="#6c6d70" /></svg>
                </SlidersSlot>
              </FilterRow>
              <HeadRow>
                {heads.map((h, i) => <HeadCell key={h} $on={i === 0} $pad={i === 0 ? 41 : 0}>{h}</HeadCell>)}
              </HeadRow>
              {rows.map(r => (
                <Row key={r.name}>
                  <TypeCell><Dot $c={r.dot} /><DeviceSlot>{r.dev}</DeviceSlot></TypeCell>
                  <Cell>{r.name}</Cell>
                  <Cell>Network</Cell>
                  <Cell>{r.status}</Cell>
                  <Cell>{r.ip}</Cell>
                  <Cell>{r.up}</Cell>
                  {r.link ? <LinkCell>{r.parent}</LinkCell> : <Cell>{r.parent}</Cell>}
                  <Cell>{r.c24}</Cell>
                  <Cell>{r.c5}</Cell>
                  <Cell>{r.conn}</Cell>
                  <Cell $c={r.expC}>{r.exp}</Cell>
                  <Cell>{r.use}</Cell>
                  <Speed $c={r.dlC}><Down c={r.dlC} />{r.dl}</Speed>
                  <Speed $c={r.ulC}><Up c={r.ulC} />{r.ul}</Speed>
                </Row>
              ))}
            </Content>
          </Main>
        </Page>
      </Window>
    </Desktop>
  );
}
